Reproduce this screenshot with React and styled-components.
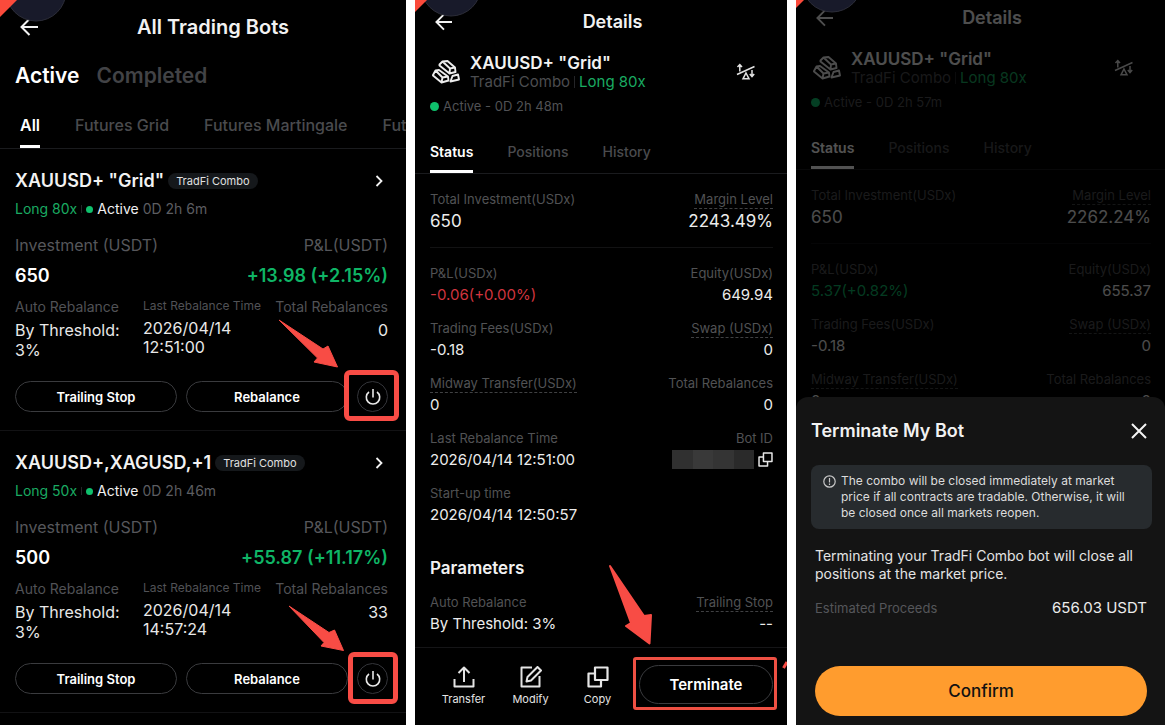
import React from "react";
import styled, { createGlobalStyle } from "styled-components";

const GlobalStyle = createGlobalStyle`
  *, *::before, *::after { box-sizing: border-box; }
  body { margin: 0; background: #fff; font-family: Inter, "Liberation Sans", sans-serif; }
  h1, h2, h3, p, dl, dd { margin: 0; }
  button { font-family: inherit; border: 0; padding: 0; background: none; color: inherit; cursor: pointer; }
  svg { display: block; }
`;

const Screens = styled.div`
  display: grid;
  grid-template-columns: 406fr 372fr 369fr;
  gap: 9px;
  min-height: 100vh;
`;

const Phone = styled.section`
  position: relative;
  min-width: 0;
  overflow: hidden;
  background: #000;
  color: #f2f2f2;
`;

const Dimmed = styled.div`
  opacity: 0.32;
`;

const Header = styled.header`
  display: flex;
  align-items: center;
  padding: ${(p) => p.$top}px ${(p) => (p.$wide ? 18 : 14)}px ${(p) => (p.$wide ? 15 : 9)}px 20px;
`;

const BackButton = styled.button`
  flex: none;
`;

const HeaderTitle = styled.h1`
  flex: 1;
  text-align: center;
  font-size: ${(p) => (p.$wide ? 20 : 18)}px;
  font-weight: 600;
  line-height: 24px;
`;

const CornerArt = styled.svg`
  position: absolute;
  top: 0;
  left: 0;
  pointer-events: none;
`;

const ModeRow = styled.nav`
  display: flex;
  gap: 17px;
  padding: 9px 15px 0;
`;

const ModeButton = styled.button`
  font-size: 21px;
  font-weight: 600;
  line-height: 26px;
  color: ${(p) => (p.$on ? "#fff" : "#424346")};
`;

const TabRow = styled.nav`
  display: flex;
  overflow: hidden;
  gap: ${(p) => p.$gap}px;
  padding: ${(p) => p.$top}px 0 0 ${(p) => p.$left}px;
  border-bottom: 1px solid #1a1b1e;
`;

const Tab = styled.button`
  flex: none;
  height: ${(p) => p.$height}px;
  padding-bottom: ${(p) => p.$height - 23}px;
  border-bottom: 3px solid ${(p) => (p.$on ? "#fff" : "transparent")};
  font-size: ${(p) => p.$size}px;
  font-weight: ${(p) => (p.$on ? 600 : 500)};
  line-height: 20px;
  color: ${(p) => (p.$on ? "#fff" : "#4a4b4e")};
  white-space: nowrap;
`;

const Card = styled.article`
  display: flex;
  flex-direction: column;
  padding: 20px 18px 18px 15px;
  border-bottom: 1px solid #121214;
`;

const CardTop = styled.div`
  display: flex;
  align-items: center;
  gap: 4px;
  height: 24px;
`;

const CardName = styled.h2`
  font-size: 18px;
  font-weight: 600;
  line-height: 24px;
  white-space: nowrap;
`;

const Pill = styled.span`
  padding: 0 8px;
  border-radius: 8px;
  background: #15181b;
  font-size: 11px;
  line-height: 16px;
  color: #e0e0e0;
  white-space: nowrap;
`;

const OpenButton = styled.button`
  margin-left: auto;
  padding-right: 5px;
`;

const CardMeta = styled.p`
  display: flex;
  align-items: center;
  margin-top: 7px;
  font-size: 14px;
  line-height: 18px;
  color: #5c5d61;
  white-space: nowrap;
`;

const Up = styled.span`
  color: #1aab62;
`;

const Bar = styled.span`
  width: 1px;
  height: ${(p) => p.$height}px;
  margin: 0 4px;
  background: #242528;
`;

const Dot = styled.span`
  width: ${(p) => p.$size}px;
  height: ${(p) => p.$size}px;
  margin-right: 4px;
  border-radius: 50%;
  background: #0fc06c;
`;

const Live = styled.span`
  margin-right: 4px;
  color: #f0f0f0;
`;

const Totals = styled.dl`
  display: flex;
  justify-content: space-between;
  margin-top: 17px;
`;

const Total = styled.div`
  text-align: ${(p) => (p.$end ? "right" : "left")};
  dt { font-size: 16px; line-height: 20px; color: #56575b; }
  dd { margin-top: 9px; font-size: 18px; font-weight: 600; line-height: 24px; color: ${(p) => (p.$end ? "#0fb566" : "#fff")}; }
`;

const Facts = styled.dl`
  display: grid;
  grid-template-columns: 128px 1fr auto;
  margin-top: 10px;
`;

const Fact = styled.div`
  text-align: ${(p) => (p.$end ? "right" : "left")};
  white-space: nowrap;
  dt { font-size: ${(p) => (p.$small ? 12 : 14)}px; line-height: ${(p) => (p.$small ? 16 : 18)}px; color: #515256; }
  dd { margin-top: ${(p) => (p.$small ? 5 : 4)}px; font-size: 16px; line-height: ${(p) => (p.$small ? 19 : 20)}px; color: #e8e8e8; }
`;

const CardActions = styled.div`
  display: grid;
  grid-template-columns: 1fr 1fr 31px;
  gap: 9px;
  height: 31px;
  margin-top: 21px;
`;

const OutlineButton = styled.button`
  width: 100%;
  height: ${(p) => p.$height}px;
  border: 1px solid #3a3b3e;
  border-radius: 20px;
  font-size: ${(p) => p.$size}px;
  font-weight: 600;
  color: #fff;
`;

const PowerButton = styled.button`
  display: grid;
  place-items: center;
  width: 31px;
  height: 31px;
  border: 1px solid #34353a;
  border-radius: 50%;
`;

const Marked = styled.div`
  position: relative;
  flex: ${(p) => (p.$grow ? 1 : "none")};
  margin-left: ${(p) => (p.$grow ? 8 : 0)}px;
`;

const MarkBox = styled.span`
  position: absolute;
  inset: ${(p) => p.$inset};
  border: ${(p) => p.$line}px solid ${(p) => p.$color || "#f84c45"};
  border-radius: ${(p) => p.$radius}px;
  pointer-events: none;
`;

const MarkArrow = styled.svg`
  position: absolute;
  left: ${(p) => p.$left}px;
  top: ${(p) => p.$top}px;
  pointer-events: none;
`;

const EdgeStroke = styled.svg`
  position: absolute;
  right: -14px;
  top: -5px;
  pointer-events: none;
`;

const Instrument = styled.div`
  display: flex;
  align-items: center;
  padding: 10px 31px 0 17px;
`;

const InstrumentText = styled.div`
  flex: 1;
  padding-left: 10px;
`;

const InstrumentName = styled.h2`
  font-size: 17px;
  font-weight: 600;
  line-height: 20px;
`;

const InstrumentMeta = styled.p`
  display: flex;
  align-items: center;
  font-size: 15px;
  line-height: 18px;
  color: #4c4d50;
`;

const StatusLine = styled.p`
  display: flex;
  align-items: center;
  padding: 7px 15px 0;
  font-size: 13px;
  line-height: 16px;
  color: #515255;
`;

const Stats = styled.dl`
  display: flex;
  flex-direction: column;
  gap: 15px;
  margin: 0 14px 0 15px;
  padding-top: ${(p) => p.$top || 17}px;
  padding-bottom: ${(p) => (p.$line ? 16 : 0)}px;
  border-bottom: ${(p) => (p.$line ? "1px solid #121213" : "0")};
`;

const StatRow = styled.div`
  display: flex;
  justify-content: space-between;
`;

const Stat = styled.div`
  display: flex;
  flex-direction: column;
  align-items: ${(p) => (p.$end ? "flex-end" : "flex-start")};
  dt { height: 16px; font-size: 13px; line-height: 16px; color: #515254; }
  dt span { display: block; height: 18px; border-bottom: ${(p) => (p.$dotted ? "1px dashed #404143" : "0")}; }
  dd { display: flex; gap: 4px; align-items: center; margin-top: 4px; font-size: ${(p) => (p.$big ? 17 : 15)}px; line-height: 20px; color: ${(p) => p.$color || "#ececec"}; }
`;

const Mosaic = styled.span`
  width: 82px;
  height: 19px;
  background: linear-gradient(90deg, #303030 0 25%, #393939 25% 50%, #343434 50% 75%, #2a2a2a 75%);
`;

const SectionTitle = styled.h2`
  padding: 31px 15px 0;
  font-size: 17px;
  font-weight: 600;
  line-height: 24px;
`;

const BottomBar = styled.footer`
  display: flex;
  align-items: flex-start;
  margin-top: 13px;
  padding: 17px 14px 14px 15px;
  border-top: 1px solid #151517;
`;

const ToolButton = styled.button`
  display: flex;
  flex-direction: column;
  align-items: center;
  width: 67px;
  padding-top: 1px;
  gap: 4px;
  font-size: 11px;
  line-height: 14px;
  color: #e4e4e4;
`;

const Sheet = styled.section`
  position: absolute;
  left: 0;
  right: 0;
  bottom: 0;
  padding: 20px 18px 9px 19px;
  border-radius: 12px 12px 0 0;
  background: #141414;
`;

const SheetTop = styled.div`
  display: flex;
  align-items: center;
  justify-content: space-between;
  margin-left: -4px;
`;

const SheetTitle = styled.h2`
  font-size: 18px;
  font-weight: 600;
  line-height: 28px;
`;

const Notice = styled.div`
  display: flex;
  gap: 5px;
  margin: 20px -5px 0 -4px;
  padding: 8px 15px 8px 12px;
  border-radius: 8px;
  background: #272b2e;
  font-size: 12px;
  line-height: 16px;
  color: #dcdcdc;
  svg { flex: none; margin-top: 2px; }
`;

const SheetText = styled.p`
  margin-top: 18px;
  font-size: 14px;
  line-height: 18px;
  color: #e4e4e4;
`;

const Proceeds = styled.dl`
  display: flex;
  justify-content: space-between;
  align-items: center;
  margin-top: 15px;
  line-height: 20px;
  dt { font-size: 13px; color: #55565a; }
  dd { font-size: 15px; color: #ececec; }
`;

const ConfirmButton = styled.button`
  width: 100%;
  height: 50px;
  margin-top: 48px;
  border-radius: 25px;
  background: #ff9c2e;
  font-size: 17px;
  font-weight: 500;
  color: #111;
`;

const Corner = ({ lift }) => (
  <CornerArt width="70" height="30" viewBox={`0 ${lift} 70 30`} aria-hidden="true">
    <circle cx="36" cy="-9" r="30" fill="#181a2a" stroke="#2c2d38" strokeWidth="1" />
    <path d="M0 0V17L17 0Z" fill="#fb4a3b" />
  </CornerArt>
);

const BackIcon = ({ size }) => (
  <svg width={size} height="18" viewBox="0 0 18 18" fill="none" stroke="currentColor" strokeWidth="2">
    <path d="M18 9H1.500M9.500 1L1.500 9L9.500 17" />
  </svg>
);

const ChevronIcon = () => (
  <svg width="8" height="12" viewBox="0 0 8 12" fill="none" stroke="currentColor" strokeWidth="1.800">
    <path d="M1.500 1L6.500 6L1.500 11" />
  </svg>
);

const PowerIcon = () => (
  <svg width="16" height="18" viewBox="0 0 16 18" fill="none" stroke="#e8e8e8" strokeWidth="1.600">
    <path d="M8 1V9.500M4 4A6.700 6.700 0 1 0 12 4" />
  </svg>
);

const BarsIcon = () => (
  <svg width="28" height="24" viewBox="0 0 28 24" fill="none" stroke="#ececec" strokeWidth="1.900" strokeLinejoin="round">
    <path d="M7.500 4.500L10.500 1.500L15.500 1L23 7.500L23.500 12L17.500 13.500L7.500 5.500ZM10.500 1.500L18 8.500L23 7.500M18 8.500L17.500 13.500" />
    <path d="M1 15L3.500 10.500L7 10L16 16.500L16.500 20.500L9.500 22.500L1 15.500ZM3.500 10.500L10.500 17.500L16 16.500M10.500 17.500L9.500 22.500" />
    <path d="M20.500 16L26 14.500L27 19.500L18.500 21.500Z" />
  </svg>
);

const SwitchIcon = () => (
  <svg width="20" height="18" viewBox="0 0 20 18" fill="none" stroke="#e2e2e2" strokeWidth="1.500">
    <path d="M1 11.500L18.500 3.500M3.800 8.500V2M1.500 4L3.800 1.500L6 4M16 7V13M13.800 11L16 13.500L18.200 11M10 10L13 15.800H7Z" />
  </svg>
);

const CopyIcon = ({ size }) => (
  <svg width={size} height={size} viewBox="0 0 22 22" fill="none" stroke="#e6e6e6" strokeWidth="2.200" strokeLinejoin="round">
    <path d="M8 1.500H20.500V14H8ZM8 7.500H1.500V20.500H14V14" />
  </svg>
);

const TransferIcon = () => (
  <svg width="22" height="22" viewBox="0 0 22 22" fill="none" stroke="currentColor" strokeWidth="2" strokeLinejoin="round">
    <path d="M1.500 13V20.500H20.500V13M11 16V2M5.500 7L11 1.500L16.500 7" />
  </svg>
);

const ModifyIcon = () => (
  <svg width="24" height="22" viewBox="0 0 24 22" fill="none" stroke="currentColor" strokeWidth="2" strokeLinejoin="round">
    <path d="M13 1.500H2.500V20.500H20.500V10M7.500 15.500L8.500 11L18.500 1L22 4.500L12 14.500Z" />
  </svg>
);

const CloseIcon = () => (
  <svg width="16" height="16" viewBox="0 0 16 16" fill="none" stroke="#f4f4f4" strokeWidth="2">
    <path d="M1 1L15 15M15 1L1 15" />
  </svg>
);

const InfoIcon = () => (
  <svg width="13" height="13" viewBox="0 0 13 13" fill="none" stroke="#c8c8c8" strokeWidth="1.200">
    <circle cx="6.500" cy="6.500" r="5.700" />
    <path d="M6.500 3V7.500M6.500 8.600V10" />
  </svg>
);

const MARKS = {
  first: { inset: "-11px -11px -9px -13px", left: -79, top: -62, w: 60, h: 49, d: "M1 1L45 30L50 27L59.500 48L36 43L39.500 39Z" },
  second: { inset: "-11px -10px -10px -9px", left: -69, top: -58, w: 57, h: 47, d: "M1 1L41 27.500L46.500 25L55.500 45.500L33 41L36 37.500Z" },
};

const BOTS = [
  { name: 'XAUUSD+ "Grid"', side: "Long 80x", age: "0D 2h 6m", invested: "650", pnl: "+13.98 (+2.15%)", time: "12:51:00", count: "0", mark: MARKS.first },
  { name: "XAUUSD+,XAGUSD,+1", side: "Long 50x", age: "0D 2h 46m", invested: "500", pnl: "+55.87 (+11.17%)", time: "14:57:24", count: "33", mark: MARKS.second },
];

const BotCard = ({ bot }) => (
  <Card>
    <CardTop>
      <CardName>{bot.name}</CardName>
      <Pill>TradFi Combo</Pill>
      <OpenButton aria-label="Open bot"><ChevronIcon /></OpenButton>
    </CardTop>
    <CardMeta>
      <Up>{bot.side}</Up>
      <Bar $height={8} />
      <Dot $size={7} />
      <Live>Active</Live>
      {bot.age}
    </CardMeta>
    <Totals>
      <Total><dt>Investment (USDT)</dt><dd>{bot.invested}</dd></Total>
      <Total $end><dt>P&amp;L(USDT)</dt><dd>{bot.pnl}</dd></Total>
    </Totals>
    <Facts>
      <Fact><dt>Auto Rebalance</dt><dd>By Threshold:<br />3%</dd></Fact>
      <Fact $small><dt>Last Rebalance Time</dt><dd>2026/04/14<br />{bot.time}</dd></Fact>
      <Fact $end><dt>Total Rebalances</dt><dd>{bot.count}</dd></Fact>
    </Facts>
    <CardActions>
      <OutlineButton $height={31} $size={13}>Trailing Stop</OutlineButton>
      <OutlineButton $height={31} $size={13}>Rebalance</OutlineButton>
      <Marked>
        <PowerButton aria-label="Terminate bot"><PowerIcon /></PowerButton>
        <MarkBox $inset={bot.mark.inset} $line={5} $radius={6} />
        <MarkArrow $left={bot.mark.left} $top={bot.mark.top} width={bot.mark.w} height={bot.mark.h} aria-hidden="true">
          <path d={bot.mark.d} fill="#f84c45" stroke="#f84c45" strokeLinejoin="round" />
        </MarkArrow>
      </Marked>
    </CardActions>
  </Card>
);

const DetailStat = ({ label, value, ...rest }) => (
  <Stat {...rest}>
    <dt><span>{label}</span></dt>
    <dd>{value}</dd>
  </Stat>
);

const DetailTop = ({ top, age, margin, pnl, pnlColor, equity, children }) => (
  <>
    <Header $top={top}>
      <BackButton aria-label="Back"><BackIcon size={17} /></BackButton>
      <HeaderTitle>Details</HeaderTitle>
    </Header>
    <Instrument>
      <BarsIcon />
      <InstrumentText>
        <InstrumentName>XAUUSD+ "Grid"</InstrumentName>
        <InstrumentMeta>TradFi Combo<Bar $height={12} /><Up>Long 80x</Up></InstrumentMeta>
      </InstrumentText>
      <SwitchIcon />
    </Instrument>
    <StatusLine><Dot $size={9} />Active - {age}</StatusLine>
    <TabRow $gap={34} $top={28} $left={15}>
      <Tab $size={14} $height={31} $on>Status</Tab>
      <Tab $size={14} $height={31}>Positions</Tab>
      <Tab $size={14} $height={31}>History</Tab>
    </TabRow>
    <Stats $line>
      <StatRow>
        <DetailStat label="Total Investment(USDx)" value="650" $big />
        <DetailStat label="Margin Level" value={margin} $end $dotted $big />
      </StatRow>
    </Stats>
    <Stats>
      <StatRow>
        <DetailStat label="P&L(USDx)" value={pnl} $color={pnlColor} />
        <DetailStat label="Equity(USDx)" value={equity} $end />
      </StatRow>
      <StatRow>
        <DetailStat label="Trading Fees(USDx)" value="-0.18" />
        <DetailStat label="Swap (USDx)" value="0" $end $dotted />
      </StatRow>
      <StatRow>
        <DetailStat label="Midway Transfer(USDx)" value="0" $dotted />
        <DetailStat label="Total Rebalances" value="0" $end />
      </StatRow>
      {children}
    </Stats>
  </>
);

export default function App() {
  return (
    <>
      <GlobalStyle />
      <Screens>
        <Phone>
          <Header $top={15} $wide>
            <BackButton aria-label="Back"><BackIcon size={18} /></BackButton>
            <HeaderTitle $wide>All Trading Bots</HeaderTitle>
          </Header>
          <ModeRow>
            <ModeButton $on>Active</ModeButton>
            <ModeButton>Completed</ModeButton>
          </ModeRow>
          <TabRow $gap={35} $top={26} $left={20}>
            <Tab $size={16} $height={33} $on>All</Tab>
            <Tab $size={16} $height={33}>Futures Grid</Tab>
            <Tab $size={16} $height={33}>Futures Martingale</Tab>
            <Tab $size={16} $height={33}>Futu</Tab>
          </TabRow>
          {BOTS.map((bot) => <BotCard key={bot.name} bot={bot} />)}
          <Corner lift={0} />
        </Phone>

        <Phone>
          <DetailTop top={10} age="0D 2h 48m" margin="2243.49%" pnl="-0.06(+0.00%)" pnlColor="#d0353f" equity="649.94">
            <StatRow>
              <DetailStat label="Last Rebalance Time" value="2026/04/14 12:51:00" />
              <DetailStat label="Bot ID" value={<><Mosaic /><CopyIcon size={15} /></>} $end />
            </StatRow>
            <StatRow>
              <DetailStat label="Start-up time" value="2026/04/14 12:50:57" />
            </StatRow>
          </DetailTop>
          <SectionTitle>Parameters</SectionTitle>
          <Stats $top={14}>
            <StatRow>
              <DetailStat label="Auto Rebalance" value="By Threshold: 3%" />
              <DetailStat label="Trailing Stop" value="--" $end $dotted />
            </StatRow>
          </Stats>
          <BottomBar>
            <ToolButton><TransferIcon />Transfer</ToolButton>
            <ToolButton><ModifyIcon />Modify</ToolButton>
            <ToolButton><CopyIcon size={22} />Copy</ToolButton>
            <Marked $grow>
              <OutlineButton $height={39} $size={15}>Terminate</OutlineButton>
              <MarkBox $inset="-8px -4px -6px -6px" $line={3} $radius={3} $color="#ee5043" />
              <MarkArrow $left={-30} $top={-101} width="45" height="82" aria-hidden="true">
                <path d="M1 2L22 59L17 62L40.500 79.500L42 51L35 52Z" fill="#f84c45" stroke="#f84c45" strokeWidth="2" strokeLinejoin="round" />
              </MarkArrow>
              <EdgeStroke width="5" height="10" aria-hidden="true">
                <path d="M1.500 8L5 2" stroke="#f84c45" strokeWidth="3" />
              </EdgeStroke>
            </Marked>
          </BottomBar>
          <Corner lift={5} />
        </Phone>

        <Phone>
          <Dimmed>
            <DetailTop top={6} age="0D 2h 57m" margin="2262.24%" pnl="5.37(+0.82%)" pnlColor="#0fb566" equity="655.37" />
          </Dimmed>
          <Corner lift={9} />
          <Sheet role="dialog" aria-label="Terminate My Bot">
            <SheetTop>
              <SheetTitle>Terminate My Bot</SheetTitle>
              <button aria-label="Close"><CloseIcon /></button>
            </SheetTop>
            <Notice>
              <InfoIcon />
              <p>The combo will be closed immediately at market price if all contracts are tradable. Otherwise, it will be closed once all markets reopen.</p>
            </Notice>
            <SheetText>Terminating your TradFi Combo bot will close all positions at the market price.</SheetText>
            <Proceeds><dt>Estimated Proceeds</dt><dd>656.03 USDT</dd></Proceeds>
            <ConfirmButton>Confirm</ConfirmButton>
          </Sheet>
        </Phone>
      </Screens>
    </>
  );
}
